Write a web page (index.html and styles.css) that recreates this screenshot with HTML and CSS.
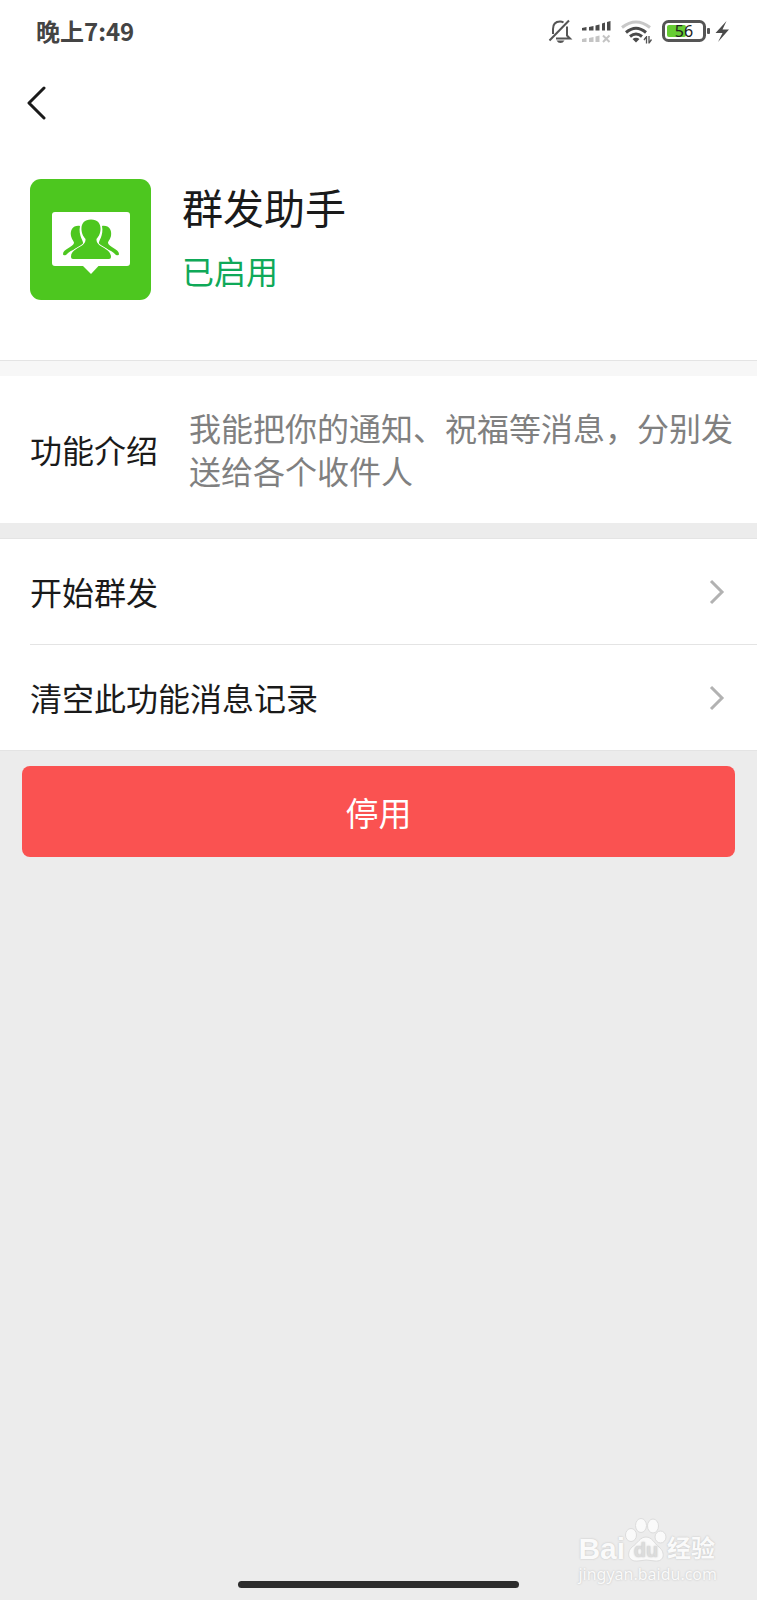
FILE: index.html
```
<!DOCTYPE html>
<html lang="zh-CN">
<head>
<meta charset="UTF-8">
<meta name="viewport" content="width=device-width, initial-scale=1.0">
<title>群发助手</title>
<link rel="stylesheet" href="styles.css">
</head>
<body>
<header class="top">
    <div class="status-bar">
        <span class="time">晚上7:49</span>
        <svg class="status-icons" width="182" height="26" viewBox="0 0 182 26" aria-hidden="true">
            <!-- muted bell -->
            <g fill="none" stroke="#555" stroke-width="2">
                <path d="M1.500 22.500 21 2.500"/>
                <path d="M5 16V11C5 6 8 3.500 12 3.500Q14 3.500 15.500 4.500"/>
                <path d="M19 8.500V17.500L22 20.500H8"/>
            </g>
            <path d="M8.500 22.500H16.500Q15 25 12.500 25 10 25 8.500 22.500Z" fill="#555"/>
            <!-- signal, two sims -->
            <path d="M34 10 38.500 9V12.500H34ZM41 9 45.500 8V12.500H41ZM47.500 7.500 51.500 6.500V12.500H47.500ZM54 5.500 57 4.500V12.500H54ZM59 4 62.500 3V12.500H59Z" fill="#4a4a4a"/>
            <path d="M34 21 38.500 20V24H34ZM41 20 45.500 19V24H41ZM47.500 18.500 51.500 17.500V24H47.500Z" fill="#c4c4c4"/>
            <path d="M55 17.500 61.500 24M61.500 17.500 55 24" stroke="#c4c4c4" stroke-width="2"/>
            <!-- wifi -->
            <g fill="none" stroke-width="3">
                <path d="M74 9.500Q88 -1.500 102 9.500" stroke="#c8c8c8"/>
                <path d="M78 14.500Q88 6 98 14.500" stroke="#4a4a4a"/>
                <path d="M82 18.500Q88 13.500 94 18.500" stroke="#4a4a4a"/>
            </g>
            <path d="M84.500 21Q88 18.500 91.500 21L88 24.500Z" fill="#4a4a4a"/>
            <path d="M98.500 18V25.500M101 18V25.500M98.500 18.500 96 22M101 25 103.500 21.500" stroke="#555" stroke-width="1.300" fill="none"/>
            <!-- battery -->
            <rect x="115.500" y="3.500" width="41" height="19" rx="5" fill="#fff" stroke="#555" stroke-width="3"/>
            <rect x="119" y="7" width="19" height="12" rx="2" fill="#66cc33"/>
            <rect x="159" y="10" width="3" height="6" rx="1" fill="#555"/>
            <text class="battery-level" x="136" y="19" text-anchor="middle">56</text>
            <path d="M178.500 3 167.500 15H174.500L170 24 181 11.500H174.500Z" fill="#4a4a4a"/>
        </svg>
    </div>
    <button class="back" type="button" aria-label="返回">
        <svg width="20" height="34" viewBox="0 0 20 34" aria-hidden="true">
            <path d="M18 2 3 17 18 32" fill="none" stroke="#1a1a1a" stroke-width="3" stroke-linecap="round" stroke-linejoin="round"/>
        </svg>
    </button>
    <div class="profile">
        <svg class="logo" width="121" height="121" viewBox="0 0 121 121" aria-hidden="true">
            <rect width="121" height="121" rx="11" fill="#4dc71f"/>
            <path d="M25 33H97Q100 33 100 36V84Q100 87 97 87H68.500L61 95 53 87H25Q22 87 22 84V36Q22 33 25 33Z" fill="#fff"/>
            <g fill="#4dc71f">
                <path d="M50 47C43 46 40 51 41 57C42 61 44 62 44 64C43 68 33 70 33 75Q33 77 36 76C41 70 51 69 53 65C54 62 48 57 50 47Z"/>
                <path d="M72 47C79 46 82 51 81 57C80 61 78 62 78 64C79 68 89 70 89 75Q89 77 86 76C81 70 71 69 69 65C68 62 74 57 72 47Z"/>
                <path d="M61 40.500C54 40.500 51 45 51.500 51C52 56 54 58 55.500 60C56 69 41 68 41 78Q41 80 43 80H79Q81 80 81 78C81 68 66 69 66.500 60C68 58 70 56 70.500 51C71 45 68 40.500 61 40.500Z" stroke="#fff" stroke-width="1.500" paint-order="stroke"/>
            </g>
        </svg>
        <div class="profile-text">
            <h1>群发助手</h1>
            <p class="enabled">已启用</p>
        </div>
    </div>
</header>

<main>
    <section class="intro">
        <h2>功能介绍</h2>
        <p>我能把你的通知、祝福等消息，分别发送给各个收件人</p>
    </section>

    <nav class="menu">
        <a class="menu-item" href="#start">
            <span>开始群发</span>
            <svg class="arrow" width="16" height="26" viewBox="0 0 16 26" aria-hidden="true"><path d="M2 2 13 13 2 24"/></svg>
        </a>
        <a class="menu-item" href="#clear">
            <span>清空此功能消息记录</span>
            <svg class="arrow" width="16" height="26" viewBox="0 0 16 26" aria-hidden="true"><path d="M2 2 13 13 2 24"/></svg>
        </a>
    </nav>

    <button class="disable" type="button">停用</button>
</main>

<footer class="home-bar"></footer>

<div class="watermark">
    <div class="watermark-brand">
        <span class="bai">Bai</span>
        <svg width="42" height="46" viewBox="0 0 42 46" aria-hidden="true">
            <g fill="#fafafa" stroke="#dcdcdc">
                <ellipse cx="6" cy="18" rx="5.500" ry="6.500"/>
                <ellipse cx="16" cy="8.500" rx="5.500" ry="7"/>
                <ellipse cx="28" cy="9" rx="5.500" ry="7"/>
                <ellipse cx="35.500" cy="20" rx="5.500" ry="6"/>
                <path d="M21 20C27 20 29 26 34 30C41 36 39 45 30 44Q21 42 13 44C3 45 1 36 7 30C13 26 15 20 21 20Z"/>
            </g>
            <text class="du" x="21" y="40" text-anchor="middle">du</text>
        </svg>
        <span class="jingyan">经验</span>
    </div>
    <span class="watermark-url">jingyan.baidu.com</span>
</div>
</body>
</html>
```

FILE: styles.css
```
* { margin: 0; padding: 0; box-sizing: border-box; }
body {
    position: relative;
    display: flex;
    flex-direction: column;
    min-height: 100vh;
    background: #ececec;
    color: #1a1a1a;
    font-family: "Noto Sans CJK SC", sans-serif;
    font-size: 32px;
    line-height: 43px;
}
h1, h2 {
    font-weight: 400;
}
button {
    border: none;
    font-family: inherit;
    cursor: pointer;
}
.top {
    background: #fff;
    padding-bottom: 60px;
    border-bottom: 1px solid #e4e4e4;
}
.status-bar {
    display: flex;
    justify-content: space-between;
    align-items: center;
    height: 62px;
    padding: 0 27px 0 36px;
}
.time {
    color: #444;
    font-size: 24px;
    font-weight: 700;
    line-height: 32px;
}
.battery-level {
    font-family: "Noto Sans", sans-serif;
    font-size: 16px;
    fill: #222;
}
.back {
    display: flex;
    align-items: center;
    height: 82px;
    padding: 0 26px;
    background: none;
}
.profile {
    display: flex;
    gap: 31px;
    padding: 35px 30px 0;
}
.logo {
    flex: none;
}
.profile-text {
    display: flex;
    flex-direction: column;
    gap: 16px;
}
.profile-text h1 {
    font-size: 41px;
    line-height: 54px;
}
.enabled {
    color: #0fa958;
}
.intro {
    display: flex;
    align-items: center;
    gap: 31px;
    padding: 30px 20px 31px 30px;
    border-top: 15px solid #f7f7f7;
    background: #fff;
}
.intro h2 {
    flex: none;
    font-size: 32px;
}
.intro p {
    color: #808080;
}
.menu {
    margin-top: 15px;
    border-top: 1px solid #e4e4e4;
    border-bottom: 1px solid #e4e4e4;
    background: #fff;
}
.menu-item {
    display: flex;
    justify-content: space-between;
    align-items: center;
    height: 105px;
    margin-left: 30px;
    padding-right: 32px;
    color: inherit;
    text-decoration: none;
}
.menu-item + .menu-item {
    height: 106px;
    border-top: 1px solid #e4e4e4;
}
.arrow {
    fill: none;
    stroke: #b2b2b2;
    stroke-width: 3;
}
.disable {
    display: block;
    width: calc(100% - 44px);
    height: 91px;
    margin: 15px 22px 0;
    border-radius: 8px;
    background: #fa5251;
    color: #fff;
    font-size: 33px;
}
.home-bar {
    width: 37%;
    height: 7px;
    margin: auto auto 12px;
    border-radius: 4px;
    background: #2d2d2d;
}
.watermark {
    position: absolute;
    right: 40px;
    bottom: 15px;
    color: #fafafa;
    text-shadow: 0 0 2px #bbb;
}
.watermark-brand {
    display: flex;
    align-items: flex-end;
}
.bai {
    font-family: "Liberation Sans", sans-serif;
    font-size: 30px;
    font-weight: 700;
    line-height: 28px;
}
.du {
    font-family: "Liberation Sans", sans-serif;
    font-size: 20px;
    font-weight: 700;
    fill: #dcdcdc;
}
.jingyan {
    font-size: 24px;
    font-weight: 700;
    line-height: 32px;
}
.watermark-url {
    display: block;
    font-family: "Noto Sans", sans-serif;
    font-size: 16px;
    line-height: 22px;
}
```
